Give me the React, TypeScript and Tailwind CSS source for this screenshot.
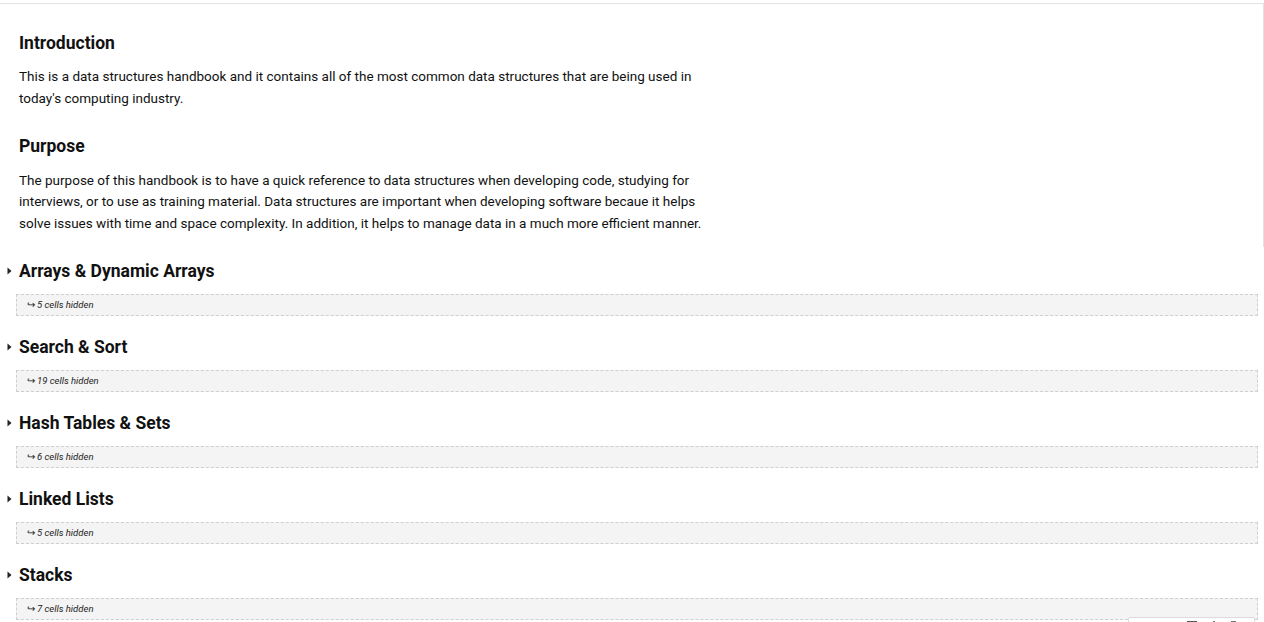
import React from "react";

const sections = [
  { title: "Arrays & Dynamic Arrays", count: 5 },
  { title: "Search & Sort", count: 19 },
  { title: "Hash Tables & Sets", count: 6 },
  { title: "Linked Lists", count: 5 },
  { title: "Stacks", count: 7 },
];

function Caret() {
  return (
    <svg width="5" height="8" viewBox="0 0 5 8" className="shrink-0 ml-[7px] mr-[7px]">
      <path d="M0.5 0.5 L4.5 4 L0.5 7.5 Z" fill="#222" />
    </svg>
  );
}

export default function App() {
  return (
    <div
      className="relative w-[1264px] h-[622px] overflow-hidden bg-white text-[#111]"
      style={{ fontFamily: "Roboto, 'Liberation Sans', sans-serif" }}
    >
      <div className="pt-[3px] flex flex-col">
        <div className="border-t border-r border-[#e2e2e2] h-[244px] pl-[19px] pr-4 flex flex-col">
          <h2 className="mt-[27px] text-[17.5px] leading-[24px] font-bold">Introduction</h2>
          <p className="mt-[11px] text-[13.5px] leading-[21.75px] w-[700px]">
            This is a data structures handbook and it contains all of the most common data structures that are being used in today's computing industry.
          </p>
          <h2 className="mt-[24px] text-[17.5px] leading-[24px] font-bold">Purpose</h2>
          <p className="mt-[12px] text-[13.5px] leading-[21.5px] w-[700px]">
            The purpose of this handbook is to have a quick reference to data structures when developing code, studying for interviews, or to use as training material. Data structures are important when developing software becaue it helps solve issues with time and space complexity. In addition, it helps to manage data in a much more efficient manner.
          </p>
        </div>
        {sections.map((s, i) => (
          <div key={s.title} className={i === 0 ? "pt-[12px] flex flex-col" : "pt-[19px] flex flex-col"}>
            <div className="flex items-center">
              <Caret />
              <h2 className="text-[17.5px] leading-[24px] font-bold">{s.title}</h2>
            </div>
            <div className="mt-[11px] ml-[16px] mr-[6px] h-[22px] border border-dashed border-[#cfcfcf] bg-[#f4f4f4] flex items-center pl-[10px]">
              <span className="text-[9.5px] italic text-[#222]">
                <span className="not-italic mr-[2px]">↪</span>
                {s.count} cells hidden
              </span>
            </div>
          </div>
        ))}
      </div>
      <div className="absolute left-[1128px] top-[617px] w-[127px] h-[20px] bg-white border border-[#dcdcdc] rounded-[2px] flex items-start pt-[3px] pl-[58px] gap-[16px]">
        <div className="w-[10px] h-[3px] bg-[#555]" />
        <div className="w-[2px] h-[3px] bg-[#777]" />
        <div className="w-[5px] h-[3px] bg-[#777]" />
      </div>
    </div>
  );
}
